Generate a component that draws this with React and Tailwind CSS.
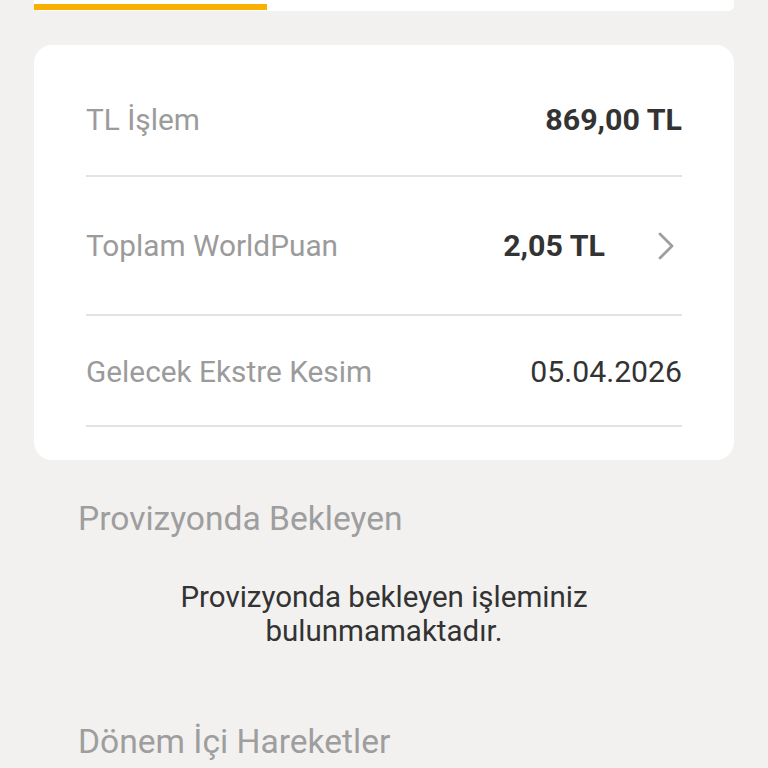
import { ChevronRight } from "lucide-react";

const font = { fontFamily: "Roboto, 'Noto Sans', sans-serif" };

function Row({ label, children, className }) {
  return (
    <div className={`flex items-center justify-between border-b-2 border-[#e3e3e3] ${className}`}>
      <span className="text-[29.8px] leading-[34px] text-[#9b9b9b]">{label}</span>
      {children}
    </div>
  );
}

export default function App() {
  return (
    <div style={font} className="min-h-[768px] w-[768px] overflow-hidden bg-[#f2f1f0]">
      <div className="mx-[34px] flex h-[11px] items-end rounded-b-md bg-white pb-px">
        <div className="h-[6px] w-[233px] bg-[#f9b000]" />
      </div>

      <div className="mx-[34px] mt-[34px] rounded-[18px] bg-white px-[52px] pb-[33px]">
        <Row label="TL İşlem" className="pt-[58px] pb-[38px]">
          <span className="text-[30.4px] font-bold leading-[34px] text-[#333]">869,00 TL</span>
        </Row>
        <Row label="Toplam WorldPuan" className="pt-[52px] pb-[51px]">
          <div className="flex items-center">
            <span className="text-[30.4px] font-bold leading-[34px] text-[#333]">2,05 TL</span>
            <ChevronRight className="ml-[37px] -my-[7px] -mr-[8px] h-[48px] w-[48px] text-[#9e9e9e]" strokeWidth={1.4} />
          </div>
        </Row>
        <Row label="Gelecek Ekstre Kesim" className="pt-[39px] pb-[36px]">
          <span className="text-[30.2px] leading-[34px] text-[#333]">05.04.2026</span>
        </Row>
      </div>

      <h2 className="mt-[41px] px-[78px] text-[33.6px] leading-[36px] text-[#9e9e9e]">Provizyonda Bekleyen</h2>
      <p className="mt-[43px] text-center text-[29.5px] leading-[34px] text-[#333]">
        Provizyonda bekleyen işleminiz
        <br />
        bulunmamaktadır.
      </p>
      <h2 className="mt-[76px] px-[78px] text-[33.6px] leading-[36px] text-[#9e9e9e]">Dönem İçi Hareketler</h2>
    </div>
  );
}
